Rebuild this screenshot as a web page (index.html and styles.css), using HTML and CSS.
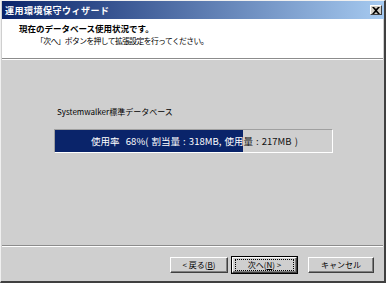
FILE: index.html
```html
<!DOCTYPE html>
<html lang="ja">
<head>
<meta charset="utf-8">
<title>運用環境保守ウィザード</title>
<link rel="stylesheet" href="styles.css">
</head>
<body>
<div class="window">
    <div class="titlebar">
        <span class="title">運用環境保守ウィザード</span>
        <span class="close-btn">
            <svg width="8" height="7" viewBox="0 0 8 7"><path d="M0 0h2l2 2 2-2h2L5 3.5 8 7H6L4 5 2 7H0l3-3.5z" fill="#000"/></svg>
        </span>
    </div>
    <div class="header">
        <div class="header-title">現在のデータベース使用状況です。</div>
        <div class="header-sub">「次へ」ボタンを押して拡張設定を行ってください。</div>
    </div>
    <div class="content">
        <div class="db-label">Systemwalker標準データベース</div>
        <div class="usage-bar">
            <div class="usage-text">使用率&nbsp;&nbsp;68%(&nbsp;割当量&nbsp;:&nbsp;318MB,&nbsp;使用量&nbsp;:&nbsp;217MB&nbsp;)</div>
            <div class="usage-fill" style="width: 68%;">
                <div class="usage-text light">使用率&nbsp;&nbsp;68%(&nbsp;割当量&nbsp;:&nbsp;318MB,&nbsp;使用量&nbsp;:&nbsp;217MB&nbsp;)</div>
            </div>
        </div>
    </div>
    <div class="footer">
        <button type="button" class="btn">&lt;&nbsp;戻る(<u>B</u>)</button>
        <button type="button" class="btn default"><span class="focus">次へ(<u>N</u>)&nbsp;&gt;</span></button>
        <button type="button" class="btn cancel">キャンセル</button>
    </div>
</div>
</body>
</html>
```

FILE: styles.css
```css
* {
    box-sizing: border-box;
}
body {
    margin: 0;
    font-family: "Noto Sans CJK JP", "DejaVu Sans", sans-serif;
    font-size: 9px;
    color: #000;
    background: #cfcfcf;
}
.window {
    width: 386px;
    height: 283px;
    display: flex;
    flex-direction: column;
    background: #cfcfcf;
    border-left: 1px solid #f0f0f0;
    border-top: 1px solid #f0f0f0;
    border-right: 2px solid #404040;
    border-bottom: 2px solid #404040;
}
.titlebar {
    height: 18px;
    margin-left: 1px;
    display: flex;
    align-items: center;
    justify-content: space-between;
    padding: 0 2px 0 3px;
    background: linear-gradient(to right, #0a246a, #a6caf0);
}
.title {
    color: #fff;
    font-weight: bold;
    font-size: 9px;
    letter-spacing: 0.5px;
}
.close-btn {
    width: 12px;
    height: 10px;
    display: flex;
    align-items: center;
    justify-content: center;
    background: #d4d0c8;
    border: 1px solid;
    border-color: #fff #404040 #404040 #fff;
}
.header {
    height: 40px;
    margin: 0 1px 0 1px;
    background: #fff;
    padding: 3px 0 0 17px;
    border-bottom: 1px solid #8c8c8c;
    box-shadow: 0 1px 0 #fff;
}
.header-title {
    font-weight: bold;
    font-size: 8.5px;
    line-height: 13px;
}
.header-sub {
    padding-left: 17px;
    line-height: 12px;
    font-size: 7.8px;
    letter-spacing: -0.6px;
}
.content {
    flex: 1;
    padding: 47px 50px 0 52px;
    border-bottom: 1px solid #8c8c8c;
    box-shadow: 0 1px 0 #fff;
    margin: 0 1px 0 1px;
}
.db-label {
    font-size: 8px;
    line-height: 12px;
    padding-left: 3px;
}
.usage-bar {
    position: relative;
    margin-top: 11px;
    height: 24px;
    border: 1px solid;
    border-color: #a0a0a0 #fff #fff #a0a0a0;
    background: #cfcfcf;
}
.usage-fill {
    position: absolute;
    top: 0;
    left: 0;
    bottom: 0;
    overflow: hidden;
    background: #0a246a;
}
.usage-text {
    width: 279px;
    height: 22px;
    line-height: 22px;
    text-align: center;
    font-size: 9.5px;
    word-spacing: 1px;
    color: #111;
}
.usage-text.light {
    color: #fff;
}
.footer {
    height: 35px;
    display: flex;
    justify-content: flex-end;
    align-items: center;
    gap: 4px;
    padding: 2px 10px 0 0;
}
.btn {
    width: 58px;
    height: 16px;
    padding: 0;
    font-family: inherit;
    font-size: 8px;
    background: #cfcfcf;
    border: 1px solid;
    border-color: #fff #404040 #404040 #fff;
    box-shadow: inset -1px -1px 0 #808080;
}
.btn.default {
    width: 65px;
    outline: 1px solid #000;
    border-color: #fff #404040 #404040 #fff;
}
.btn.cancel {
    width: 66px;
    margin-left: 7px;
}
.focus {
    display: block;
    margin: 0 2px;
    border: 1px dotted #000;
    line-height: 10px;
}
```
